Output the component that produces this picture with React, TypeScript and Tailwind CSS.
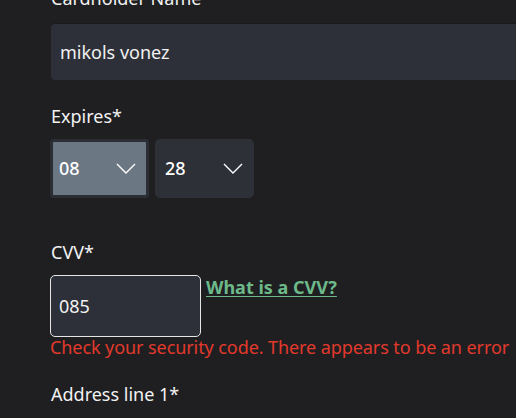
import { useState } from "react"

const font = { fontFamily: '"Noto Sans", "Open Sans", sans-serif' }

function Chevron() {
  return (
    <svg width="20" height="11" viewBox="0 0 20 11" className="shrink-0">
      <path d="M1 1 L10 10 L19 1" fill="none" stroke="#ffffff" strokeWidth="1.4" />
    </svg>
  )
}

function Select({ value, active }: { value: string; active?: boolean }) {
  return (
    <div
      className={
        active
          ? "w-[99px] h-[59px] rounded-[4px] border-[3px] border-[#2b2f35] bg-[#6c7784] flex items-center justify-between pl-[6px] pr-[10px]"
          : "w-[99px] h-[59px] rounded-[5px] bg-[#2d3037] flex items-center justify-between pl-[10px] pr-[11px]"
      }
    >
      <span className="text-[18px] font-medium text-white">{value}</span>
      <Chevron />
    </div>
  )
}

export default function App() {
  const [name] = useState("mikols vonez")

  return (
    <div className="w-[516px] h-[418px] overflow-hidden bg-[#1f1f22] text-[#f2f2f2]" style={font}>
      <div className="pl-[51px] -mt-[14px] flex flex-col">
        <label className="text-[18px] leading-[24px]">Cardholder Name</label>
        <div className="mt-[13px] h-[57px] w-[480px] rounded-[4px] bg-[#2d3038] border-t border-[#1a1a1d] flex items-center pl-[9px] text-[18px]">
          {name}
        </div>

        <label className="mt-[24px] text-[18px] leading-[24px]">Expires*</label>
        <div className="mt-[11px] flex gap-[6px] -ml-px">
          <Select value="08" active />
          <Select value="28" />
        </div>

        <label className="mt-[42px] text-[18px] leading-[24px]">CVV*</label>
        <div className="mt-[11px] flex items-start -ml-px">
          <div className="w-[151px] h-[62px] rounded-[5px] border border-[#e6e6e6] bg-[#2d3038] flex items-center pl-[8px] text-[18px]">
            085
          </div>
          <a href="#" className="ml-[5px] text-[18px] font-bold leading-[24px] text-[#6db98a] underline underline-offset-2">
            What is a CVV?
          </a>
        </div>
        <p className="-mt-[2px] text-[18px] tracking-[-0.08px] leading-[24px] text-[#e2392b] -ml-px whitespace-nowrap">
          Check your security code. There appears to be an error
        </p>

        <label className="mt-[23px] text-[18px] leading-[24px]">Address line 1*</label>
      </div>
    </div>
  )
}
